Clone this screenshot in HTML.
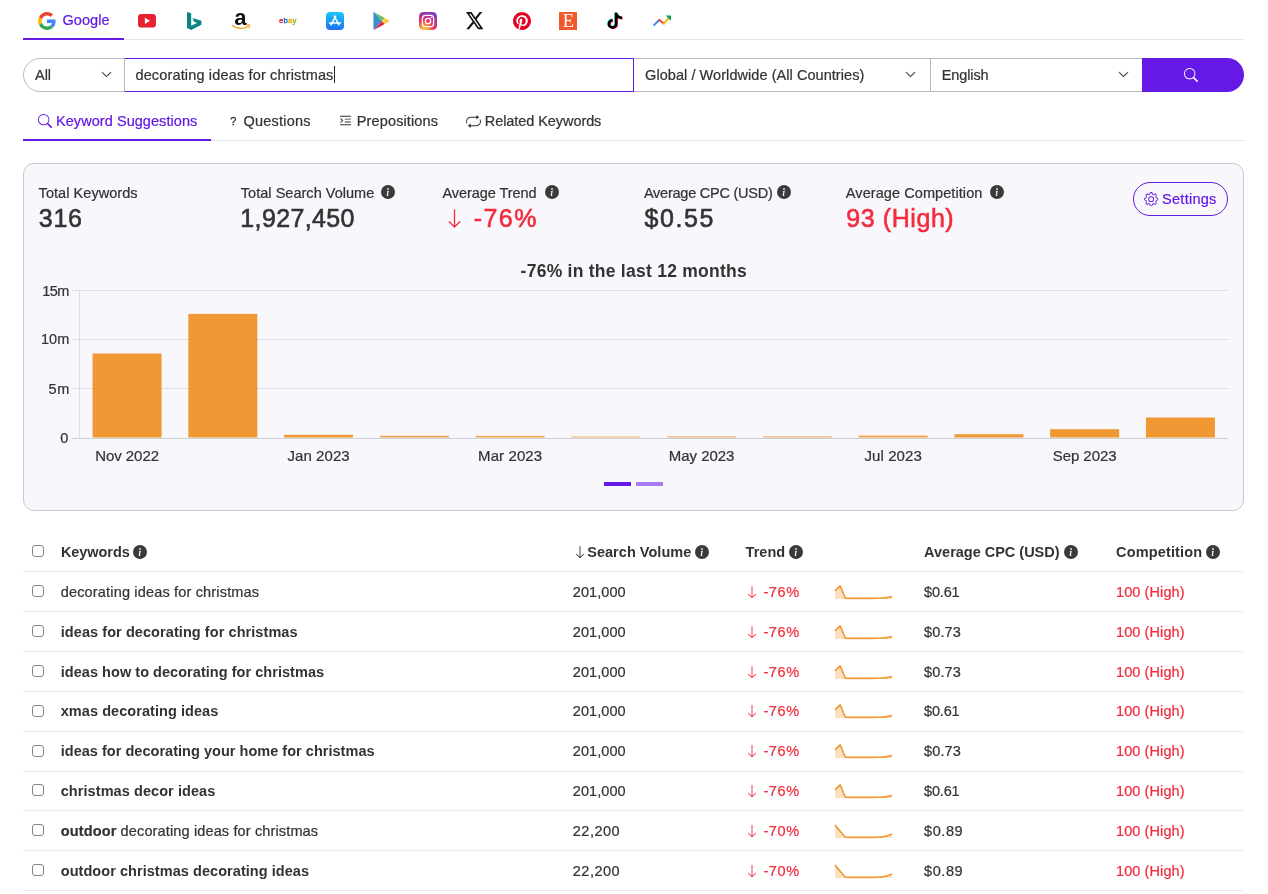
<!DOCTYPE html>
<html lang="en">
<head>
<meta charset="utf-8">
<title>Keyword Tool</title>
<style>

html,body{margin:0;padding:0;background:#fff;}
body{width:1268px;height:894px;position:relative;overflow:hidden;font-family:"Liberation Sans", sans-serif;color:#333333;}
.t{position:absolute;white-space:pre;line-height:1;font-family:"Liberation Sans", sans-serif;}

.a{position:absolute;}
.ln{position:absolute;height:1px;background:#e6e6ea;}
.box{position:absolute;box-sizing:border-box;top:58px;height:34px;border:1px solid #b9b9c4;background:#fff;}
.cb{position:absolute;left:32px;width:12px;height:12px;box-sizing:border-box;border:1px solid #858585;border-radius:3px;background:#fff;}
.bar{position:absolute;background:#f09833;}
.gl{position:absolute;left:72px;width:1156px;height:1px;background:#e0e0e6;}
svg{position:absolute;overflow:visible;}
.ic{fill:#3a3a3a;}
</style>
</head>
<body>
<!-- ===== top source tabs ===== -->
<div class="ln" style="left:23px;top:39px;width:1221px;"></div>
<div class="a" style="left:23px;top:38px;width:101px;height:2px;background:#6419e6;"></div>

<!-- ===== search row ===== -->
<div class="box" style="left:633px;width:298px;"></div>
<div class="box" style="left:930px;width:213px;"></div>
<div class="box" style="left:124px;width:510px;border-color:#6419e6;"></div>
<div class="box" style="left:23px;width:102px;border-radius:17px 0 0 17px;"></div>
<div class="a" style="left:1142px;top:58px;width:102px;height:34px;background:#6419e6;border-radius:0 17px 17px 0;"></div>
<div class="a" style="left:334px;top:66px;width:1px;height:17px;background:#222;"></div>

<!-- ===== sub tabs ===== -->
<div class="ln" style="left:23px;top:140px;width:1221px;"></div>
<div class="a" style="left:23px;top:139px;width:187.5px;height:2px;background:#6419e6;"></div>

<!-- ===== stats card ===== -->
<div class="a" style="left:23px;top:163px;width:1221px;height:348px;box-sizing:border-box;border:1px solid #c9c9d2;border-radius:11px;background:#f8f7fc;"></div>
<div class="a" style="left:1133px;top:182px;width:95px;height:34px;box-sizing:border-box;border:1px solid #6419e6;border-radius:17px;"></div>

<svg style="left:100.70px;top:69.00px;" width="11" height="11" viewBox="0 0 16 16" fill="#333" stroke="#333" stroke-width="0.6"><path fill-rule="evenodd" d="M1.646 4.646a.5.5 0 0 1 .708 0L8 10.293l5.646-5.647a.5.5 0 0 1 .708.708l-6 6a.5.5 0 0 1-.708 0l-6-6a.5.5 0 0 1 0-.708"/></svg>
<svg style="left:905.30px;top:69.00px;" width="11" height="11" viewBox="0 0 16 16" fill="#333" stroke="#333" stroke-width="0.6"><path fill-rule="evenodd" d="M1.646 4.646a.5.5 0 0 1 .708 0L8 10.293l5.646-5.647a.5.5 0 0 1 .708.708l-6 6a.5.5 0 0 1-.708 0l-6-6a.5.5 0 0 1 0-.708"/></svg>
<svg style="left:1117.70px;top:69.00px;" width="11" height="11" viewBox="0 0 16 16" fill="#333" stroke="#333" stroke-width="0.6"><path fill-rule="evenodd" d="M1.646 4.646a.5.5 0 0 1 .708 0L8 10.293l5.646-5.647a.5.5 0 0 1 .708.708l-6 6a.5.5 0 0 1-.708 0l-6-6a.5.5 0 0 1 0-.708"/></svg>
<svg style="left:1184.00px;top:67.70px;" width="14" height="14" viewBox="0 0 16 16" fill="#fff"><path fill-rule="evenodd" d="M11.742 10.344a6.5 6.5 0 1 0-1.397 1.398h-.001q.044.06.098.115l3.85 3.85a1 1 0 0 0 1.415-1.414l-3.85-3.85a1 1 0 0 0-.115-.1zM12 6.5a5.5 5.5 0 1 1-11 0 5.5 5.5 0 0 1 11 0"/></svg>
<svg style="left:37.70px;top:113.80px;" width="14" height="14" viewBox="0 0 16 16" fill="#6419e6"><path fill-rule="evenodd" d="M11.742 10.344a6.5 6.5 0 1 0-1.397 1.398h-.001q.044.06.098.115l3.85 3.85a1 1 0 0 0 1.415-1.414l-3.85-3.85a1 1 0 0 0-.115-.1zM12 6.5a5.5 5.5 0 1 1-11 0 5.5 5.5 0 0 1 11 0"/></svg>
<svg style="left:338.00px;top:112.50px;" width="15" height="15" viewBox="0 0 16 16" fill="#333"><path fill-rule="evenodd" d="M2 3.5a.5.5 0 0 1 .5-.5h11a.5.5 0 0 1 0 1h-11a.5.5 0 0 1-.5-.5m.646 2.146a.5.5 0 0 1 .708 0l2 2a.5.5 0 0 1 0 .708l-2 2a.5.5 0 0 1-.708-.708L4.293 8 2.646 6.354a.5.5 0 0 1 0-.708M7 6.5a.5.5 0 0 1 .5-.5h6a.5.5 0 0 1 0 1h-6a.5.5 0 0 1-.5-.5m0 3a.5.5 0 0 1 .5-.5h6a.5.5 0 0 1 0 1h-6a.5.5 0 0 1-.5-.5m-5 3a.5.5 0 0 1 .5-.5h11a.5.5 0 0 1 0 1h-11a.5.5 0 0 1-.5-.5"/></svg>
<svg style="left:466.00px;top:113.50px;" width="15" height="15" viewBox="0 0 16 16" fill="#333"><path fill-rule="evenodd" d="M11 5.466V4H5a4 4 0 0 0-3.584 5.777.5.5 0 1 1-.896.446A5 5 0 0 1 5 3h6V1.534a.25.25 0 0 1 .41-.192l2.36 1.966c.12.1.12.284 0 .384l-2.36 1.966a.25.25 0 0 1-.41-.192m3.81.086a.5.5 0 0 1 .67.225A5 5 0 0 1 11 13H5v1.466a.25.25 0 0 1-.41.192l-2.36-1.966a.25.25 0 0 1 0-.384l2.36-1.966a.25.25 0 0 1 .41.192V12h6a4 4 0 0 0 3.585-5.777.5.5 0 0 1 .225-.67Z"/></svg>
<svg style="left:1144.40px;top:191.80px;" width="14.3" height="14.3" viewBox="0 0 16 16" fill="#6419e6"><path fill-rule="evenodd" d="M8 4.754a3.246 3.246 0 1 0 0 6.492 3.246 3.246 0 0 0 0-6.492M5.754 8a2.246 2.246 0 1 1 4.492 0 2.246 2.246 0 0 1-4.492 0"/><path fill-rule="evenodd" d="M9.796 1.343c-.527-1.79-3.065-1.79-3.592 0l-.094.319a.873.873 0 0 1-1.255.52l-.292-.16c-1.64-.892-3.433.902-2.54 2.541l.159.292a.873.873 0 0 1-.52 1.255l-.319.094c-1.79.527-1.79 3.065 0 3.592l.319.094a.873.873 0 0 1 .52 1.255l-.16.292c-.892 1.64.901 3.434 2.541 2.54l.292-.159a.873.873 0 0 1 1.255.52l.094.319c.527 1.79 3.065 1.79 3.592 0l.094-.319a.873.873 0 0 1 1.255-.52l.292.16c1.64.893 3.434-.902 2.54-2.541l-.159-.292a.873.873 0 0 1 .52-1.255l.319-.094c1.79-.527 1.79-3.065 0-3.592l-.319-.094a.873.873 0 0 1-.52-1.255l.16-.292c.893-1.64-.902-3.433-2.541-2.54l-.292.159a.873.873 0 0 1-1.255-.52zm-2.633.283c.246-.835 1.428-.835 1.674 0l.094.319a1.873 1.873 0 0 0 2.693 1.115l.291-.16c.764-.415 1.6.42 1.184 1.185l-.159.292a1.873 1.873 0 0 0 1.116 2.692l.318.094c.835.246.835 1.428 0 1.674l-.319.094a1.873 1.873 0 0 0-1.115 2.693l.16.291c.415.764-.42 1.6-1.185 1.184l-.291-.159a1.873 1.873 0 0 0-2.693 1.116l-.094.318c-.246.835-1.428.835-1.674 0l-.094-.319a1.873 1.873 0 0 0-2.692-1.115l-.292.16c-.764.415-1.6-.42-1.184-1.185l.159-.291A1.873 1.873 0 0 0 1.945 8.93l-.319-.094c-.835-.246-.835-1.428 0-1.674l.319-.094A1.873 1.873 0 0 0 3.06 4.377l-.16-.292c-.415-.764.42-1.6 1.185-1.184l.292.159a1.873 1.873 0 0 0 2.692-1.115z"/></svg>
<svg style="left:381.40px;top:184.70px;" width="14" height="14" viewBox="0 0 16 16" fill="#3a3a3a"><path fill-rule="evenodd" d="M8 16A8 8 0 1 0 8 0a8 8 0 0 0 0 16m.93-9.412-1 4.705c-.07.34.029.533.304.533.194 0 .487-.07.686-.246l-.088.416c-.287.346-.92.598-1.465.598-.703 0-1.002-.422-.808-1.319l.738-3.468c.064-.293.006-.399-.287-.47l-.451-.081.082-.381 2.29-.287zM8 5.5a1 1 0 1 1 0-2 1 1 0 0 1 0 2"/></svg>
<svg style="left:544.60px;top:184.70px;" width="14" height="14" viewBox="0 0 16 16" fill="#3a3a3a"><path fill-rule="evenodd" d="M8 16A8 8 0 1 0 8 0a8 8 0 0 0 0 16m.93-9.412-1 4.705c-.07.34.029.533.304.533.194 0 .487-.07.686-.246l-.088.416c-.287.346-.92.598-1.465.598-.703 0-1.002-.422-.808-1.319l.738-3.468c.064-.293.006-.399-.287-.47l-.451-.081.082-.381 2.29-.287zM8 5.5a1 1 0 1 1 0-2 1 1 0 0 1 0 2"/></svg>
<svg style="left:777.20px;top:184.70px;" width="14" height="14" viewBox="0 0 16 16" fill="#3a3a3a"><path fill-rule="evenodd" d="M8 16A8 8 0 1 0 8 0a8 8 0 0 0 0 16m.93-9.412-1 4.705c-.07.34.029.533.304.533.194 0 .487-.07.686-.246l-.088.416c-.287.346-.92.598-1.465.598-.703 0-1.002-.422-.808-1.319l.738-3.468c.064-.293.006-.399-.287-.47l-.451-.081.082-.381 2.29-.287zM8 5.5a1 1 0 1 1 0-2 1 1 0 0 1 0 2"/></svg>
<svg style="left:990.00px;top:184.70px;" width="14" height="14" viewBox="0 0 16 16" fill="#3a3a3a"><path fill-rule="evenodd" d="M8 16A8 8 0 1 0 8 0a8 8 0 0 0 0 16m.93-9.412-1 4.705c-.07.34.029.533.304.533.194 0 .487-.07.686-.246l-.088.416c-.287.346-.92.598-1.465.598-.703 0-1.002-.422-.808-1.319l.738-3.468c.064-.293.006-.399-.287-.47l-.451-.081.082-.381 2.29-.287zM8 5.5a1 1 0 1 1 0-2 1 1 0 0 1 0 2"/></svg>
<svg style="left:443.50px;top:207.50px;" width="21" height="21" viewBox="0 0 16 16" fill="#f22c3d"><path fill-rule="evenodd" d="M8 1a.5.5 0 0 1 .5.5v11.793l3.146-3.147a.5.5 0 0 1 .708.708l-4 4a.5.5 0 0 1-.708 0l-4-4a.5.5 0 0 1 .708-.708L7.5 13.293V1.5A.5.5 0 0 1 8 1"/></svg>
<!-- chart -->
<div class="gl" style="top:289.5px;"></div>
<div class="gl" style="top:338.8px;"></div>
<div class="gl" style="top:388.1px;"></div>
<div class="a" style="left:72px;top:437.5px;width:1156.3px;height:1px;background:#cfcfd6;"></div>
<div class="a" style="left:78.7px;top:290px;width:1px;height:148px;background:#dcdce2;"></div>
<svg style="left:0;top:0;" width="1268" height="894" viewBox="0 0 1268 894" fill="#f09833"><rect x="92.58" y="353.50" width="69" height="84.00"/><rect x="188.34" y="313.90" width="69" height="123.60"/><rect x="284.10" y="434.80" width="69" height="2.70"/><rect x="379.85" y="435.80" width="69" height="1.70" fill-opacity="0.87"/><rect x="475.61" y="435.90" width="69" height="1.60" fill-opacity="0.86"/><rect x="571.37" y="436.50" width="69" height="1.00" fill-opacity="0.80"/><rect x="667.13" y="436.40" width="69" height="1.10" fill-opacity="0.81"/><rect x="762.89" y="436.40" width="69" height="1.10" fill-opacity="0.81"/><rect x="858.65" y="435.60" width="69" height="1.90" fill-opacity="0.89"/><rect x="954.40" y="434.20" width="69" height="3.30"/><rect x="1050.16" y="429.20" width="69" height="8.30"/><rect x="1145.92" y="417.50" width="69" height="20.00"/></svg>
<div class="a" style="left:604px;top:482px;width:27px;height:4px;background:#6419e6;"></div>
<div class="a" style="left:636px;top:482px;width:27px;height:4px;background:#a67df0;"></div>

<!-- ===== table ===== -->
<div class="ln" style="left:23px;top:571px;width:1221px;background:#ececef;"></div>
<div class="ln" style="left:23px;top:611px;width:1221px;background:#ececef;"></div>
<div class="ln" style="left:23px;top:651px;width:1221px;background:#ececef;"></div>
<div class="ln" style="left:23px;top:691px;width:1221px;background:#ececef;"></div>
<div class="ln" style="left:23px;top:731px;width:1221px;background:#ececef;"></div>
<div class="ln" style="left:23px;top:771px;width:1221px;background:#ececef;"></div>
<div class="ln" style="left:23px;top:810px;width:1221px;background:#ececef;"></div>
<div class="ln" style="left:23px;top:850px;width:1221px;background:#ececef;"></div>
<div class="ln" style="left:23px;top:890px;width:1221px;background:#ececef;"></div>
<div class="cb" style="top:545px;"></div>
<div class="cb" style="top:585px;"></div>
<div class="cb" style="top:625px;"></div>
<div class="cb" style="top:665px;"></div>
<div class="cb" style="top:705px;"></div>
<div class="cb" style="top:745px;"></div>
<div class="cb" style="top:784px;"></div>
<div class="cb" style="top:824px;"></div>
<div class="cb" style="top:864px;"></div>
<svg style="left:133.30px;top:544.60px;" width="14" height="14" viewBox="0 0 16 16" fill="#3a3a3a"><path fill-rule="evenodd" d="M8 16A8 8 0 1 0 8 0a8 8 0 0 0 0 16m.93-9.412-1 4.705c-.07.34.029.533.304.533.194 0 .487-.07.686-.246l-.088.416c-.287.346-.92.598-1.465.598-.703 0-1.002-.422-.808-1.319l.738-3.468c.064-.293.006-.399-.287-.47l-.451-.081.082-.381 2.29-.287zM8 5.5a1 1 0 1 1 0-2 1 1 0 0 1 0 2"/></svg>
<svg style="left:695.30px;top:544.60px;" width="14" height="14" viewBox="0 0 16 16" fill="#3a3a3a"><path fill-rule="evenodd" d="M8 16A8 8 0 1 0 8 0a8 8 0 0 0 0 16m.93-9.412-1 4.705c-.07.34.029.533.304.533.194 0 .487-.07.686-.246l-.088.416c-.287.346-.92.598-1.465.598-.703 0-1.002-.422-.808-1.319l.738-3.468c.064-.293.006-.399-.287-.47l-.451-.081.082-.381 2.29-.287zM8 5.5a1 1 0 1 1 0-2 1 1 0 0 1 0 2"/></svg>
<svg style="left:789.00px;top:544.60px;" width="14" height="14" viewBox="0 0 16 16" fill="#3a3a3a"><path fill-rule="evenodd" d="M8 16A8 8 0 1 0 8 0a8 8 0 0 0 0 16m.93-9.412-1 4.705c-.07.34.029.533.304.533.194 0 .487-.07.686-.246l-.088.416c-.287.346-.92.598-1.465.598-.703 0-1.002-.422-.808-1.319l.738-3.468c.064-.293.006-.399-.287-.47l-.451-.081.082-.381 2.29-.287zM8 5.5a1 1 0 1 1 0-2 1 1 0 0 1 0 2"/></svg>
<svg style="left:1064.30px;top:544.60px;" width="14" height="14" viewBox="0 0 16 16" fill="#3a3a3a"><path fill-rule="evenodd" d="M8 16A8 8 0 1 0 8 0a8 8 0 0 0 0 16m.93-9.412-1 4.705c-.07.34.029.533.304.533.194 0 .487-.07.686-.246l-.088.416c-.287.346-.92.598-1.465.598-.703 0-1.002-.422-.808-1.319l.738-3.468c.064-.293.006-.399-.287-.47l-.451-.081.082-.381 2.29-.287zM8 5.5a1 1 0 1 1 0-2 1 1 0 0 1 0 2"/></svg>
<svg style="left:1205.80px;top:544.60px;" width="14" height="14" viewBox="0 0 16 16" fill="#3a3a3a"><path fill-rule="evenodd" d="M8 16A8 8 0 1 0 8 0a8 8 0 0 0 0 16m.93-9.412-1 4.705c-.07.34.029.533.304.533.194 0 .487-.07.686-.246l-.088.416c-.287.346-.92.598-1.465.598-.703 0-1.002-.422-.808-1.319l.738-3.468c.064-.293.006-.399-.287-.47l-.451-.081.082-.381 2.29-.287zM8 5.5a1 1 0 1 1 0-2 1 1 0 0 1 0 2"/></svg>
<svg style="left:572.60px;top:544.60px;" width="14" height="14" viewBox="0 0 16 16" fill="#333"><path fill-rule="evenodd" d="M8 1a.5.5 0 0 1 .5.5v11.793l3.146-3.147a.5.5 0 0 1 .708.708l-4 4a.5.5 0 0 1-.708 0l-4-4a.5.5 0 0 1 .708-.708L7.5 13.293V1.5A.5.5 0 0 1 8 1"/></svg>
<svg style="left:745.20px;top:584.80px;" width="14" height="14" viewBox="0 0 16 16" fill="#f22c3d"><path fill-rule="evenodd" d="M8 1a.5.5 0 0 1 .5.5v11.793l3.146-3.147a.5.5 0 0 1 .708.708l-4 4a.5.5 0 0 1-.708 0l-4-4a.5.5 0 0 1 .708-.708L7.5 13.293V1.5A.5.5 0 0 1 8 1"/></svg>
<svg style="left:0;top:0;" width="1268" height="894" viewBox="0 0 1268 894"><path d="M835.00 590.94 L840.18 585.90 L845.36 598.25 L850.55 598.37 L855.73 598.37 L860.91 598.37 L866.09 598.37 L871.27 598.37 L876.45 598.31 L881.64 598.12 L886.82 597.62 L892.00 596.48 L892.00 599.10 L835.00 599.10 Z" fill="#f09833" fill-opacity="0.3"/><path d="M835.00 590.94 L840.18 585.90 L845.36 598.25 L850.55 598.37 L855.73 598.37 L860.91 598.37 L866.09 598.37 L871.27 598.37 L876.45 598.31 L881.64 598.12 L886.82 597.62 L892.00 596.48" fill="none" stroke="#f09833" stroke-width="1.6" stroke-linejoin="round" stroke-linecap="butt"/></svg>
<svg style="left:745.20px;top:624.80px;" width="14" height="14" viewBox="0 0 16 16" fill="#f22c3d"><path fill-rule="evenodd" d="M8 1a.5.5 0 0 1 .5.5v11.793l3.146-3.147a.5.5 0 0 1 .708.708l-4 4a.5.5 0 0 1-.708 0l-4-4a.5.5 0 0 1 .708-.708L7.5 13.293V1.5A.5.5 0 0 1 8 1"/></svg>
<svg style="left:0;top:0;" width="1268" height="894" viewBox="0 0 1268 894"><path d="M835.00 630.94 L840.18 625.90 L845.36 638.25 L850.55 638.37 L855.73 638.37 L860.91 638.37 L866.09 638.37 L871.27 638.37 L876.45 638.31 L881.64 638.12 L886.82 637.62 L892.00 636.48 L892.00 639.10 L835.00 639.10 Z" fill="#f09833" fill-opacity="0.3"/><path d="M835.00 630.94 L840.18 625.90 L845.36 638.25 L850.55 638.37 L855.73 638.37 L860.91 638.37 L866.09 638.37 L871.27 638.37 L876.45 638.31 L881.64 638.12 L886.82 637.62 L892.00 636.48" fill="none" stroke="#f09833" stroke-width="1.6" stroke-linejoin="round" stroke-linecap="butt"/></svg>
<svg style="left:745.20px;top:664.80px;" width="14" height="14" viewBox="0 0 16 16" fill="#f22c3d"><path fill-rule="evenodd" d="M8 1a.5.5 0 0 1 .5.5v11.793l3.146-3.147a.5.5 0 0 1 .708.708l-4 4a.5.5 0 0 1-.708 0l-4-4a.5.5 0 0 1 .708-.708L7.5 13.293V1.5A.5.5 0 0 1 8 1"/></svg>
<svg style="left:0;top:0;" width="1268" height="894" viewBox="0 0 1268 894"><path d="M835.00 670.94 L840.18 665.90 L845.36 678.25 L850.55 678.37 L855.73 678.37 L860.91 678.37 L866.09 678.37 L871.27 678.37 L876.45 678.31 L881.64 678.12 L886.82 677.62 L892.00 676.48 L892.00 679.10 L835.00 679.10 Z" fill="#f09833" fill-opacity="0.3"/><path d="M835.00 670.94 L840.18 665.90 L845.36 678.25 L850.55 678.37 L855.73 678.37 L860.91 678.37 L866.09 678.37 L871.27 678.37 L876.45 678.31 L881.64 678.12 L886.82 677.62 L892.00 676.48" fill="none" stroke="#f09833" stroke-width="1.6" stroke-linejoin="round" stroke-linecap="butt"/></svg>
<svg style="left:745.20px;top:703.80px;" width="14" height="14" viewBox="0 0 16 16" fill="#f22c3d"><path fill-rule="evenodd" d="M8 1a.5.5 0 0 1 .5.5v11.793l3.146-3.147a.5.5 0 0 1 .708.708l-4 4a.5.5 0 0 1-.708 0l-4-4a.5.5 0 0 1 .708-.708L7.5 13.293V1.5A.5.5 0 0 1 8 1"/></svg>
<svg style="left:0;top:0;" width="1268" height="894" viewBox="0 0 1268 894"><path d="M835.00 709.94 L840.18 704.90 L845.36 717.25 L850.55 717.37 L855.73 717.37 L860.91 717.37 L866.09 717.37 L871.27 717.37 L876.45 717.31 L881.64 717.12 L886.82 716.62 L892.00 715.48 L892.00 718.10 L835.00 718.10 Z" fill="#f09833" fill-opacity="0.3"/><path d="M835.00 709.94 L840.18 704.90 L845.36 717.25 L850.55 717.37 L855.73 717.37 L860.91 717.37 L866.09 717.37 L871.27 717.37 L876.45 717.31 L881.64 717.12 L886.82 716.62 L892.00 715.48" fill="none" stroke="#f09833" stroke-width="1.6" stroke-linejoin="round" stroke-linecap="butt"/></svg>
<svg style="left:745.20px;top:743.80px;" width="14" height="14" viewBox="0 0 16 16" fill="#f22c3d"><path fill-rule="evenodd" d="M8 1a.5.5 0 0 1 .5.5v11.793l3.146-3.147a.5.5 0 0 1 .708.708l-4 4a.5.5 0 0 1-.708 0l-4-4a.5.5 0 0 1 .708-.708L7.5 13.293V1.5A.5.5 0 0 1 8 1"/></svg>
<svg style="left:0;top:0;" width="1268" height="894" viewBox="0 0 1268 894"><path d="M835.00 749.94 L840.18 744.90 L845.36 757.25 L850.55 757.37 L855.73 757.37 L860.91 757.37 L866.09 757.37 L871.27 757.37 L876.45 757.31 L881.64 757.12 L886.82 756.62 L892.00 755.48 L892.00 758.10 L835.00 758.10 Z" fill="#f09833" fill-opacity="0.3"/><path d="M835.00 749.94 L840.18 744.90 L845.36 757.25 L850.55 757.37 L855.73 757.37 L860.91 757.37 L866.09 757.37 L871.27 757.37 L876.45 757.31 L881.64 757.12 L886.82 756.62 L892.00 755.48" fill="none" stroke="#f09833" stroke-width="1.6" stroke-linejoin="round" stroke-linecap="butt"/></svg>
<svg style="left:745.20px;top:783.80px;" width="14" height="14" viewBox="0 0 16 16" fill="#f22c3d"><path fill-rule="evenodd" d="M8 1a.5.5 0 0 1 .5.5v11.793l3.146-3.147a.5.5 0 0 1 .708.708l-4 4a.5.5 0 0 1-.708 0l-4-4a.5.5 0 0 1 .708-.708L7.5 13.293V1.5A.5.5 0 0 1 8 1"/></svg>
<svg style="left:0;top:0;" width="1268" height="894" viewBox="0 0 1268 894"><path d="M835.00 789.94 L840.18 784.90 L845.36 797.25 L850.55 797.37 L855.73 797.37 L860.91 797.37 L866.09 797.37 L871.27 797.37 L876.45 797.31 L881.64 797.12 L886.82 796.62 L892.00 795.48 L892.00 798.10 L835.00 798.10 Z" fill="#f09833" fill-opacity="0.3"/><path d="M835.00 789.94 L840.18 784.90 L845.36 797.25 L850.55 797.37 L855.73 797.37 L860.91 797.37 L866.09 797.37 L871.27 797.37 L876.45 797.31 L881.64 797.12 L886.82 796.62 L892.00 795.48" fill="none" stroke="#f09833" stroke-width="1.6" stroke-linejoin="round" stroke-linecap="butt"/></svg>
<svg style="left:745.20px;top:823.80px;" width="14" height="14" viewBox="0 0 16 16" fill="#f22c3d"><path fill-rule="evenodd" d="M8 1a.5.5 0 0 1 .5.5v11.793l3.146-3.147a.5.5 0 0 1 .708.708l-4 4a.5.5 0 0 1-.708 0l-4-4a.5.5 0 0 1 .708-.708L7.5 13.293V1.5A.5.5 0 0 1 8 1"/></svg>
<svg style="left:0;top:0;" width="1268" height="894" viewBox="0 0 1268 894"><path d="M835.00 824.90 L840.18 831.20 L845.36 837.25 L850.55 837.37 L855.73 837.37 L860.91 837.37 L866.09 837.37 L871.27 837.37 L876.45 837.25 L881.64 836.87 L886.82 835.99 L892.00 834.10 L892.00 838.10 L835.00 838.10 Z" fill="#f09833" fill-opacity="0.3"/><path d="M835.00 824.90 L840.18 831.20 L845.36 837.25 L850.55 837.37 L855.73 837.37 L860.91 837.37 L866.09 837.37 L871.27 837.37 L876.45 837.25 L881.64 836.87 L886.82 835.99 L892.00 834.10" fill="none" stroke="#f09833" stroke-width="1.6" stroke-linejoin="round" stroke-linecap="butt"/></svg>
<svg style="left:745.20px;top:863.80px;" width="14" height="14" viewBox="0 0 16 16" fill="#f22c3d"><path fill-rule="evenodd" d="M8 1a.5.5 0 0 1 .5.5v11.793l3.146-3.147a.5.5 0 0 1 .708.708l-4 4a.5.5 0 0 1-.708 0l-4-4a.5.5 0 0 1 .708-.708L7.5 13.293V1.5A.5.5 0 0 1 8 1"/></svg>
<svg style="left:0;top:0;" width="1268" height="894" viewBox="0 0 1268 894"><path d="M835.00 864.90 L840.18 871.20 L845.36 877.25 L850.55 877.37 L855.73 877.37 L860.91 877.37 L866.09 877.37 L871.27 877.37 L876.45 877.25 L881.64 876.87 L886.82 875.99 L892.00 874.10 L892.00 878.10 L835.00 878.10 Z" fill="#f09833" fill-opacity="0.3"/><path d="M835.00 864.90 L840.18 871.20 L845.36 877.25 L850.55 877.37 L855.73 877.37 L860.91 877.37 L866.09 877.37 L871.27 877.37 L876.45 877.25 L881.64 876.87 L886.82 875.99 L892.00 874.10" fill="none" stroke="#f09833" stroke-width="1.6" stroke-linejoin="round" stroke-linecap="butt"/></svg>

<div class="a" style="left:0;top:0;width:1268px;height:894px;will-change:transform;">
<!-- Google G -->
<svg style="left:38px;top:12px;" width="18" height="18" viewBox="0 0 48 48"><path fill="#EA4335" d="M24 9.5c3.54 0 6.71 1.22 9.21 3.6l6.85-6.85C35.9 2.38 30.47 0 24 0 14.62 0 6.51 5.38 2.56 13.22l7.98 6.19C12.43 13.72 17.74 9.5 24 9.5z"/><path fill="#4285F4" d="M46.98 24.55c0-1.57-.15-3.09-.38-4.55H24v9.02h12.94c-.58 2.96-2.26 5.48-4.78 7.18l7.73 6c4.51-4.18 7.09-10.36 7.09-17.65z"/><path fill="#FBBC05" d="M10.53 28.59c-.48-1.45-.76-2.99-.76-4.59s.27-3.14.76-4.59l-7.98-6.19C.92 16.46 0 20.12 0 24c0 3.88.92 7.54 2.56 10.78l7.97-6.19z"/><path fill="#34A853" d="M24 48c6.48 0 11.93-2.13 15.89-5.81l-7.73-6c-2.15 1.45-4.92 2.3-8.16 2.3-6.26 0-11.57-4.22-13.47-9.91l-7.98 6.19C6.51 42.62 14.62 48 24 48z"/></svg>
<!-- YouTube -->
<svg style="left:138px;top:14px;" width="18" height="13.6" viewBox="0 0 18 13.6"><rect x="0" y="0" width="18" height="13.6" rx="3.4" ry="3.4" fill="#e62230"/><path d="M6.9 3.7 L12 6.8 L6.9 9.9 Z" fill="#fff"/></svg>
<!-- Bing -->
<svg style="left:186.9px;top:12px;" width="14.4" height="18" viewBox="5 0 15.8 22.5" preserveAspectRatio="none"><path fill="#0c8484" d="M5 0 L9.6 1.6 V17.3 L16 13.7 L12.8 12.2 L10.9 7.4 L20.8 10.9 V16 L9.6 22.5 L5 19.9 Z"/></svg>
<!-- Amazon -->
<span class="t" style="left:234.2px;top:6.6px;font-size:22px;font-weight:700;color:#111;letter-spacing:0;">a</span>
<svg style="left:232px;top:23.5px;" width="18.5" height="6" viewBox="0 0 18.5 6"><path d="M0.3 1.6 C5 5.2 11.5 5.2 16 2.4" fill="none" stroke="#f79400" stroke-width="1.2" stroke-linecap="round"/><path d="M14.2 1.1 L17.9 0.6 L16.9 3.9" fill="none" stroke="#f79400" stroke-width="0.9" stroke-linecap="round" stroke-linejoin="round"/></svg>
<!-- ebay -->
<span class="t" style="left:279px;top:17.2px;font-size:7.8px;line-height:1;letter-spacing:0.15px;font-weight:400;-webkit-text-stroke:0.35px;"><span style="color:#e53238">e</span><span style="color:#0064d2">b</span><span style="color:#f5af02">a</span><span style="color:#86b817">y</span></span>
<!-- App Store -->
<svg style="left:326px;top:12px;" width="18" height="18" viewBox="0 0 18 18"><defs><linearGradient id="gas" x1="0" y1="0" x2="0" y2="1"><stop offset="0" stop-color="#1bc8fb"/><stop offset="1" stop-color="#1d6ff2"/></linearGradient></defs><rect width="18" height="18" rx="4" fill="url(#gas)"/><g stroke="#fff" stroke-width="1.5" stroke-linecap="round" fill="none"><path d="M9.7 4.2 L5 13"/><path d="M8.3 4.2 L13 13"/><path d="M3.5 11.1 H14.5"/></g></svg>
<!-- Google Play -->
<svg style="left:373px;top:12px;" width="16.8" height="18" viewBox="0 0 16 18" preserveAspectRatio="none"><path d="M0.4 1.2 Q0.4 0.2 1.3 0.2 L8.3 9 L1.3 17.8 Q0.4 17.8 0.4 16.8 Z" fill="#3b8fd0"/><path d="M1.3 0.2 L11.2 5.9 L8.3 9 Z" fill="#6cbf5a"/><path d="M1.3 17.8 L11.2 12.1 L8.3 9 Z" fill="#e4253f"/><path d="M11.2 5.9 L14.9 8 Q15.9 9 14.9 10 L11.2 12.1 L8.3 9 Z" fill="#fbc64a"/></svg>
<!-- Instagram -->
<svg style="left:419px;top:12px;" width="18" height="18" viewBox="0 0 18 18"><defs><radialGradient id="gig" cx="0.28" cy="1.05" r="1.15"><stop offset="0" stop-color="#fdd468"/><stop offset="0.25" stop-color="#f8953a"/><stop offset="0.5" stop-color="#e8365d"/><stop offset="0.75" stop-color="#b62f9c"/><stop offset="1" stop-color="#6a45c8"/></radialGradient></defs><rect width="18" height="18" rx="4.4" fill="url(#gig)"/><rect x="3.4" y="3.4" width="11.2" height="11.2" rx="3.2" fill="none" stroke="#fff" stroke-width="1.3"/><circle cx="9" cy="9" r="2.7" fill="none" stroke="#fff" stroke-width="1.3"/><circle cx="12.4" cy="5.6" r="0.75" fill="#fff"/></svg>
<!-- X -->
<svg style="left:466.2px;top:12.3px;" width="17.4" height="17.3" viewBox="1.25 2.25 21.6 19.5" preserveAspectRatio="none"><path fill="#111" d="M18.244 2.25h3.308l-7.227 8.26 8.502 11.24H16.17l-5.214-6.817L4.99 21.75H1.68l7.73-8.835L1.254 2.25H8.08l4.713 6.231zm-1.161 17.52h1.833L7.084 4.126H5.117z"/></svg>
<!-- Pinterest -->
<svg style="left:513px;top:12px;" width="18" height="18" viewBox="0 0 24 24"><path fill="#e60023" d="M12.017 0C5.396 0 .029 5.367.029 11.987c0 5.079 3.158 9.417 7.618 11.162-.105-.949-.199-2.403.041-3.439.219-.937 1.406-5.957 1.406-5.957s-.359-.72-.359-1.781c0-1.663.967-2.911 2.168-2.911 1.024 0 1.518.769 1.518 1.688 0 1.029-.653 2.567-.992 3.992-.285 1.193.6 2.165 1.775 2.165 2.128 0 3.768-2.245 3.768-5.487 0-2.861-2.063-4.869-5.008-4.869-3.41 0-5.409 2.562-5.409 5.199 0 1.033.394 2.143.889 2.741.099.12.112.225.085.345-.09.375-.293 1.199-.334 1.363-.053.225-.172.271-.401.165-1.495-.69-2.433-2.878-2.433-4.646 0-3.776 2.748-7.252 7.92-7.252 4.158 0 7.392 2.967 7.392 6.923 0 4.135-2.607 7.462-6.233 7.462-1.214 0-2.354-.629-2.758-1.379l-.749 2.848c-.269 1.045-1.004 2.352-1.498 3.146 1.123.345 2.306.535 3.55.535 6.607 0 11.985-5.365 11.985-11.987C23.97 5.39 18.592.026 11.985.026L12.017 0z"/></svg>
<!-- Etsy -->
<div class="a" style="left:559px;top:12px;width:18px;height:18px;background:#f1582c;"></div>
<span class="t" style="left:562.7px;top:11.6px;font-size:18.3px;font-family:'Liberation Serif',serif;color:#fff;">E</span>
<!-- TikTok -->
<svg style="left:606.5px;top:12px;" width="17" height="18" viewBox="0 0 17 18"><g fill="none" stroke-width="2.6"><path d="M9.1 0.8 V11.9 A3.6 3.6 0 1 1 5.5 8.3 M9.1 1.2 C9.6 4 11.8 5.6 15 5.7" stroke="#25f4ee" transform="translate(-0.6,-0.5)"/><path d="M9.1 0.8 V11.9 A3.6 3.6 0 1 1 5.5 8.3 M9.1 1.2 C9.6 4 11.8 5.6 15 5.7" stroke="#fe2c55" transform="translate(0.6,0.5)"/><path d="M9.1 0.8 V11.9 A3.6 3.6 0 1 1 5.5 8.3 M9.1 1.2 C9.6 4 11.8 5.6 15 5.7" stroke="#000"/></g></svg>
<!-- Google Trends -->
<svg style="left:653px;top:12px;" width="19" height="18" viewBox="0 0 19 18"><g fill="none" stroke-width="1.9" stroke-linecap="round"><path d="M1 13.2 L6.2 8" stroke="#4285f4"/><path d="M6.2 8 L10.8 11.6" stroke="#ea4335"/><path d="M10.8 11.6 L15.4 6.4" stroke="#fbbc04"/></g><path d="M12.6 3.4 H18 V8.8 Z" fill="#0f9d58"/></svg>

<span class="t" style="font-size:14.5px;line-height:16px;color:#6419e6;-webkit-text-stroke:0.22px;letter-spacing:0.079px;left:62.42px;top:12px;">Google</span>
<span class="t" style="font-size:14.5px;line-height:16px;-webkit-text-stroke:0.22px;letter-spacing:-0.083px;left:35.12px;top:67px;">All</span>
<span class="t" style="font-size:14.5px;line-height:16px;-webkit-text-stroke:0.22px;letter-spacing:0.156px;left:135.42px;top:67px;">decorating ideas for christmas</span>
<span class="t" style="font-size:14.5px;line-height:16px;-webkit-text-stroke:0.22px;letter-spacing:0.056px;left:645.12px;top:67px;">Global / Worldwide (All Countries)</span>
<span class="t" style="font-size:14.5px;line-height:16px;-webkit-text-stroke:0.22px;letter-spacing:-0.134px;left:941.82px;top:67px;">English</span>
<span class="t" style="font-size:14.5px;line-height:16px;color:#6419e6;-webkit-text-stroke:0.22px;letter-spacing:0.056px;left:56.02px;top:113px;">Keyword Suggestions</span>
<span class="t" style="font-size:11px;line-height:12px;-webkit-text-stroke:0.3px;left:230.36px;top:115px;">?</span>
<span class="t" style="font-size:14.5px;line-height:16px;-webkit-text-stroke:0.22px;letter-spacing:0.233px;left:243.42px;top:113px;">Questions</span>
<span class="t" style="font-size:14.5px;line-height:16px;-webkit-text-stroke:0.22px;letter-spacing:0.124px;left:356.82px;top:113px;">Prepositions</span>
<span class="t" style="font-size:14.5px;line-height:16px;-webkit-text-stroke:0.22px;letter-spacing:-0.074px;left:484.82px;top:113px;">Related Keywords</span>
<span class="t" style="font-size:14.5px;line-height:16px;-webkit-text-stroke:0.22px;letter-spacing:0.049px;left:38.62px;top:185px;">Total Keywords</span>
<span class="t" style="font-size:14.5px;line-height:16px;-webkit-text-stroke:0.22px;letter-spacing:0.026px;left:240.82px;top:185px;">Total Search Volume</span>
<span class="t" style="font-size:14.5px;line-height:16px;-webkit-text-stroke:0.22px;letter-spacing:-0.058px;left:442.42px;top:185px;">Average Trend</span>
<span class="t" style="font-size:14.5px;line-height:16px;-webkit-text-stroke:0.22px;letter-spacing:-0.234px;left:643.92px;top:185px;">Average CPC (USD)</span>
<span class="t" style="font-size:14.5px;line-height:16px;-webkit-text-stroke:0.22px;letter-spacing:0.078px;left:845.82px;top:185px;">Average Competition</span>
<span class="t" style="font-size:25px;line-height:28px;-webkit-text-stroke:0.6px;letter-spacing:0.741px;left:38.80px;top:204px;">316</span>
<span class="t" style="font-size:25px;line-height:28px;-webkit-text-stroke:0.6px;letter-spacing:0.373px;left:240.30px;top:204px;">1,927,450</span>
<span class="t" style="font-size:25px;line-height:28px;color:#f22c3d;-webkit-text-stroke:0.6px;letter-spacing:1.442px;left:473.70px;top:204px;">-76%</span>
<span class="t" style="font-size:25px;line-height:28px;-webkit-text-stroke:0.6px;letter-spacing:1.559px;left:644.60px;top:204px;">$0.55</span>
<span class="t" style="font-size:25px;line-height:28px;color:#f22c3d;-webkit-text-stroke:0.6px;letter-spacing:0.571px;left:846.30px;top:204px;">93 (High)</span>
<span class="t" style="font-size:14.5px;line-height:16px;color:#6419e6;-webkit-text-stroke:0.22px;letter-spacing:0.265px;left:1162.12px;top:191px;">Settings</span>
<span class="t" style="font-size:17.5px;line-height:20px;font-weight:700;letter-spacing:0.253px;left:520.60px;top:261px;">-76% in the last 12 months</span>
<span class="t" style="font-size:14.5px;line-height:16px;-webkit-text-stroke:0.22px;letter-spacing:-0.554px;left:42.17px;top:283px;">15m</span>
<span class="t" style="font-size:14.5px;line-height:16px;-webkit-text-stroke:0.22px;letter-spacing:0.021px;left:41.02px;top:331px;">10m</span>
<span class="t" style="font-size:14.5px;line-height:16px;-webkit-text-stroke:0.22px;letter-spacing:0.704px;left:48.42px;top:381px;">5m</span>
<span class="t" style="font-size:14.5px;line-height:16px;-webkit-text-stroke:0.22px;left:60.32px;top:430px;">0</span>
<span class="t" style="font-size:15px;line-height:17px;-webkit-text-stroke:0.22px;letter-spacing:-0.046px;left:95.13px;top:447px;">Nov 2022</span>
<span class="t" style="font-size:15px;line-height:17px;-webkit-text-stroke:0.22px;letter-spacing:0.067px;left:287.50px;top:447px;">Jan 2023</span>
<span class="t" style="font-size:15px;line-height:17px;-webkit-text-stroke:0.22px;letter-spacing:0.089px;left:478.11px;top:447px;">Mar 2023</span>
<span class="t" style="font-size:15px;line-height:17px;-webkit-text-stroke:0.22px;letter-spacing:-0.025px;left:668.78px;top:447px;">May 2023</span>
<span class="t" style="font-size:15px;line-height:17px;-webkit-text-stroke:0.22px;letter-spacing:0.069px;left:864.55px;top:447px;">Jul 2023</span>
<span class="t" style="font-size:15px;line-height:17px;-webkit-text-stroke:0.22px;letter-spacing:-0.048px;left:1052.71px;top:447px;">Sep 2023</span>
<span class="t" style="font-size:14.5px;line-height:16px;font-weight:700;letter-spacing:-0.065px;left:60.92px;top:544px;">Keywords</span>
<span class="t" style="font-size:14.5px;line-height:16px;font-weight:700;letter-spacing:0.030px;left:587.22px;top:544px;">Search Volume</span>
<span class="t" style="font-size:14.5px;line-height:16px;font-weight:700;letter-spacing:0.019px;left:745.62px;top:544px;">Trend</span>
<span class="t" style="font-size:14.5px;line-height:16px;font-weight:700;letter-spacing:-0.011px;left:924.12px;top:544px;">Average CPC (USD)</span>
<span class="t" style="font-size:14.5px;line-height:16px;font-weight:700;letter-spacing:0.148px;left:1116.02px;top:544px;">Competition</span>
<span class="t" style="font-size:14.5px;line-height:16px;-webkit-text-stroke:0.22px;letter-spacing:0.170px;left:60.72px;top:584px;">decorating ideas for christmas</span>
<span class="t" style="font-size:14.5px;line-height:16px;-webkit-text-stroke:0.22px;letter-spacing:0.056px;left:572.82px;top:584px;">201,000</span>
<span class="t" style="font-size:14.5px;line-height:16px;color:#f22c3d;-webkit-text-stroke:0.22px;letter-spacing:0.600px;left:763.42px;top:584px;">-76%</span>
<span class="t" style="font-size:14.5px;line-height:16px;-webkit-text-stroke:0.22px;letter-spacing:-0.209px;left:924.12px;top:584px;">$0.61</span>
<span class="t" style="font-size:14.5px;line-height:16px;color:#f22c3d;-webkit-text-stroke:0.22px;letter-spacing:0.095px;left:1116.02px;top:584px;">100 (High)</span>
<span class="t" style="font-size:14.5px;line-height:16px;font-weight:700;letter-spacing:0.072px;left:60.72px;top:624px;">ideas for decorating for christmas</span>
<span class="t" style="font-size:14.5px;line-height:16px;-webkit-text-stroke:0.22px;letter-spacing:0.056px;left:572.82px;top:624px;">201,000</span>
<span class="t" style="font-size:14.5px;line-height:16px;color:#f22c3d;-webkit-text-stroke:0.22px;letter-spacing:0.600px;left:763.42px;top:624px;">-76%</span>
<span class="t" style="font-size:14.5px;line-height:16px;-webkit-text-stroke:0.22px;letter-spacing:0.091px;left:924.12px;top:624px;">$0.73</span>
<span class="t" style="font-size:14.5px;line-height:16px;color:#f22c3d;-webkit-text-stroke:0.22px;letter-spacing:0.095px;left:1116.02px;top:624px;">100 (High)</span>
<span class="t" style="font-size:14.5px;line-height:16px;font-weight:700;letter-spacing:0.042px;left:60.72px;top:664px;">ideas how to decorating for christmas</span>
<span class="t" style="font-size:14.5px;line-height:16px;-webkit-text-stroke:0.22px;letter-spacing:0.056px;left:572.82px;top:664px;">201,000</span>
<span class="t" style="font-size:14.5px;line-height:16px;color:#f22c3d;-webkit-text-stroke:0.22px;letter-spacing:0.600px;left:763.42px;top:664px;">-76%</span>
<span class="t" style="font-size:14.5px;line-height:16px;-webkit-text-stroke:0.22px;letter-spacing:0.091px;left:924.12px;top:664px;">$0.73</span>
<span class="t" style="font-size:14.5px;line-height:16px;color:#f22c3d;-webkit-text-stroke:0.22px;letter-spacing:0.095px;left:1116.02px;top:664px;">100 (High)</span>
<span class="t" style="font-size:14.5px;line-height:16px;font-weight:700;letter-spacing:0.061px;left:60.72px;top:703px;">xmas decorating ideas</span>
<span class="t" style="font-size:14.5px;line-height:16px;-webkit-text-stroke:0.22px;letter-spacing:0.056px;left:572.82px;top:703px;">201,000</span>
<span class="t" style="font-size:14.5px;line-height:16px;color:#f22c3d;-webkit-text-stroke:0.22px;letter-spacing:0.600px;left:763.42px;top:703px;">-76%</span>
<span class="t" style="font-size:14.5px;line-height:16px;-webkit-text-stroke:0.22px;letter-spacing:-0.209px;left:924.12px;top:703px;">$0.61</span>
<span class="t" style="font-size:14.5px;line-height:16px;color:#f22c3d;-webkit-text-stroke:0.22px;letter-spacing:0.095px;left:1116.02px;top:703px;">100 (High)</span>
<span class="t" style="font-size:14.5px;line-height:16px;font-weight:700;letter-spacing:0.028px;left:60.72px;top:743px;">ideas for decorating your home for christmas</span>
<span class="t" style="font-size:14.5px;line-height:16px;-webkit-text-stroke:0.22px;letter-spacing:0.056px;left:572.82px;top:743px;">201,000</span>
<span class="t" style="font-size:14.5px;line-height:16px;color:#f22c3d;-webkit-text-stroke:0.22px;letter-spacing:0.600px;left:763.42px;top:743px;">-76%</span>
<span class="t" style="font-size:14.5px;line-height:16px;-webkit-text-stroke:0.22px;letter-spacing:0.091px;left:924.12px;top:743px;">$0.73</span>
<span class="t" style="font-size:14.5px;line-height:16px;color:#f22c3d;-webkit-text-stroke:0.22px;letter-spacing:0.095px;left:1116.02px;top:743px;">100 (High)</span>
<span class="t" style="font-size:14.5px;line-height:16px;font-weight:700;letter-spacing:0.071px;left:60.72px;top:783px;">christmas decor ideas</span>
<span class="t" style="font-size:14.5px;line-height:16px;-webkit-text-stroke:0.22px;letter-spacing:0.056px;left:572.82px;top:783px;">201,000</span>
<span class="t" style="font-size:14.5px;line-height:16px;color:#f22c3d;-webkit-text-stroke:0.22px;letter-spacing:0.600px;left:763.42px;top:783px;">-76%</span>
<span class="t" style="font-size:14.5px;line-height:16px;-webkit-text-stroke:0.22px;letter-spacing:-0.209px;left:924.12px;top:783px;">$0.61</span>
<span class="t" style="font-size:14.5px;line-height:16px;color:#f22c3d;-webkit-text-stroke:0.22px;letter-spacing:0.095px;left:1116.02px;top:783px;">100 (High)</span>
<span class="t" style="font-size:14.5px;line-height:16px;-webkit-text-stroke:0.22px;letter-spacing:0.139px;left:60.72px;top:823px;"><b>outdoor</b> decorating ideas for christmas</span>
<span class="t" style="font-size:14.5px;line-height:16px;-webkit-text-stroke:0.22px;letter-spacing:0.480px;left:572.82px;top:823px;">22,200</span>
<span class="t" style="font-size:14.5px;line-height:16px;color:#f22c3d;-webkit-text-stroke:0.22px;letter-spacing:0.600px;left:763.42px;top:823px;">-70%</span>
<span class="t" style="font-size:14.5px;line-height:16px;-webkit-text-stroke:0.22px;letter-spacing:0.541px;left:924.12px;top:823px;">$0.89</span>
<span class="t" style="font-size:14.5px;line-height:16px;color:#f22c3d;-webkit-text-stroke:0.22px;letter-spacing:0.095px;left:1116.02px;top:823px;">100 (High)</span>
<span class="t" style="font-size:14.5px;line-height:16px;font-weight:700;letter-spacing:0.054px;left:60.72px;top:863px;">outdoor christmas decorating ideas</span>
<span class="t" style="font-size:14.5px;line-height:16px;-webkit-text-stroke:0.22px;letter-spacing:0.480px;left:572.82px;top:863px;">22,200</span>
<span class="t" style="font-size:14.5px;line-height:16px;color:#f22c3d;-webkit-text-stroke:0.22px;letter-spacing:0.600px;left:763.42px;top:863px;">-70%</span>
<span class="t" style="font-size:14.5px;line-height:16px;-webkit-text-stroke:0.22px;letter-spacing:0.541px;left:924.12px;top:863px;">$0.89</span>
<span class="t" style="font-size:14.5px;line-height:16px;color:#f22c3d;-webkit-text-stroke:0.22px;letter-spacing:0.095px;left:1116.02px;top:863px;">100 (High)</span>
</div>
</body>
</html>
